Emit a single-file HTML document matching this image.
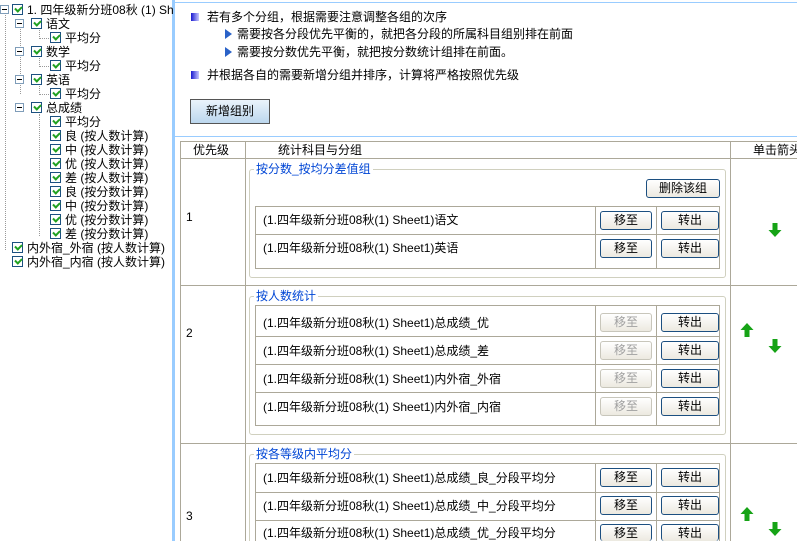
<!DOCTYPE html>
<html><head><meta charset="utf-8"><style>
*{margin:0;padding:0;box-sizing:border-box}
html,body{width:797px;height:541px;overflow:hidden}
body{background:#fff;font-family:"Liberation Sans","WenQuanYi Zen Hei","Noto Sans CJK SC",sans-serif;font-size:12px;color:#000}
#w{position:relative;width:797px;height:541px;overflow:hidden}
.a{position:absolute;white-space:nowrap}
.t{position:absolute;white-space:nowrap;height:14px;line-height:14px;font-size:12px}
.cb{position:absolute;width:11px;height:11px;border:1px solid #1c5180;background:#fff}
.cb:after{content:"";position:absolute;left:2px;top:1px;width:5px;height:3px;border-left:2px solid #21a121;border-bottom:2px solid #21a121;transform:rotate(-45deg)}
.mx{position:absolute;width:9px;height:9px;border:1px solid #7f9db9;background:#fff}
.mx:after{content:"";position:absolute;left:1px;top:3px;width:5px;height:1px;background:#000}
.dv{position:absolute;border-left:1px dotted #999}
.dh{position:absolute;border-top:1px dotted #999}
.bl{position:absolute;width:8px;height:8px;background:linear-gradient(90deg,#1a1ad0,#c8c8ff)}
.tri{position:absolute;width:0;height:0;border-left:7px solid #2a62c8;border-top:5px solid transparent;border-bottom:5px solid transparent}
.btn{position:absolute;height:19px;border:1px solid #1c4f80;border-radius:3px;background:linear-gradient(#fff,#ece9e0);text-align:center;line-height:17px;font-size:12px;overflow:hidden}
.dis{border-color:#c8c6bb;color:#a0a0a0}
.ln{position:absolute;background:#aca899}
.fs{position:absolute;border:1px solid #d0d0bf;border-radius:3px}
.lg{position:absolute;background:#fff;color:#0046d5;padding:0 2px;font-size:12px;line-height:14px}
.arr{position:absolute;width:14px;height:14px}
</style></head><body><div id="w">
<div class="a" style="left:172px;top:0;width:3px;height:541px;background:#99ccff"></div>
<div class="a" style="left:175px;top:2px;width:622px;height:1px;background:#99ccff"></div>

<div class="mx" style="left:0;top:5px"></div><div class="cb" style="left:12px;top:4px"></div><div class="t" style="left:27px;top:3px">1. 四年级新分班08秋 (1) Sh</div>
<div class="dv" style="left:5px;top:15px;height:235px"></div>
<div class="dv" style="left:20px;top:24px;height:70px"></div>
<div class="mx" style="left:15px;top:19px"></div><div class="cb" style="left:31px;top:18px"></div><div class="t" style="left:46px;top:17px">语文</div>
<div class="dh" style="left:39px;top:38px;width:10px"></div><div class="dv" style="left:39px;top:30px;height:9px"></div><div class="cb" style="left:50px;top:32px"></div><div class="t" style="left:65px;top:31px">平均分</div>
<div class="mx" style="left:15px;top:47px"></div><div class="cb" style="left:31px;top:46px"></div><div class="t" style="left:46px;top:45px">数学</div>
<div class="dh" style="left:39px;top:66px;width:10px"></div><div class="dv" style="left:39px;top:58px;height:9px"></div><div class="cb" style="left:50px;top:60px"></div><div class="t" style="left:65px;top:59px">平均分</div>
<div class="mx" style="left:15px;top:75px"></div><div class="cb" style="left:31px;top:74px"></div><div class="t" style="left:46px;top:73px">英语</div>
<div class="dh" style="left:39px;top:94px;width:10px"></div><div class="dv" style="left:39px;top:86px;height:9px"></div><div class="cb" style="left:50px;top:88px"></div><div class="t" style="left:65px;top:87px">平均分</div>
<div class="mx" style="left:15px;top:103px"></div><div class="cb" style="left:31px;top:102px"></div><div class="t" style="left:46px;top:101px">总成绩</div>
<div class="dv" style="left:39px;top:114px;height:122px"></div>
<div class="cb" style="left:50px;top:116px"></div><div class="t" style="left:65px;top:115px">平均分</div>
<div class="cb" style="left:50px;top:130px"></div><div class="t" style="left:65px;top:129px">良 (按人数计算)</div>
<div class="cb" style="left:50px;top:144px"></div><div class="t" style="left:65px;top:143px">中 (按人数计算)</div>
<div class="cb" style="left:50px;top:158px"></div><div class="t" style="left:65px;top:157px">优 (按人数计算)</div>
<div class="cb" style="left:50px;top:172px"></div><div class="t" style="left:65px;top:171px">差 (按人数计算)</div>
<div class="cb" style="left:50px;top:186px"></div><div class="t" style="left:65px;top:185px">良 (按分数计算)</div>
<div class="cb" style="left:50px;top:200px"></div><div class="t" style="left:65px;top:199px">中 (按分数计算)</div>
<div class="cb" style="left:50px;top:214px"></div><div class="t" style="left:65px;top:213px">优 (按分数计算)</div>
<div class="cb" style="left:50px;top:228px"></div><div class="t" style="left:65px;top:227px">差 (按分数计算)</div>
<div class="cb" style="left:12px;top:242px"></div><div class="t" style="left:27px;top:241px">内外宿_外宿 (按人数计算)</div>
<div class="cb" style="left:12px;top:256px"></div><div class="t" style="left:27px;top:255px">内外宿_内宿 (按人数计算)</div>

<div class="bl" style="left:191px;top:13px"></div><div class="t" style="left:207px;top:10px">若有多个分组，根据需要注意调整各组的次序</div>
<div class="tri" style="left:225px;top:29px"></div><div class="t" style="left:237px;top:27px">需要按各分段优先平衡的，就把各分段的所属科目组别排在前面</div>
<div class="tri" style="left:225px;top:47px"></div><div class="t" style="left:237px;top:45px">需要按分数优先平衡，就把按分数统计组排在前面。</div>
<div class="bl" style="left:191px;top:71px"></div><div class="t" style="left:207px;top:68px">并根据各自的需要新增分组并排序，计算将严格按照优先级</div>
<div class="a" style="left:190px;top:99px;width:80px;height:25px;border:1px solid #555;background:linear-gradient(#eaf3fb,#bcd7ee);text-align:center;line-height:23px">新增组别</div>
<div class="a" style="left:175px;top:136px;width:622px;height:1px;background:#99ccff"></div>

<div class="ln" style="left:180px;top:141px;width:617px;height:1px"></div>
<div class="ln" style="left:180px;top:158px;width:617px;height:1px"></div>
<div class="ln" style="left:180px;top:285px;width:617px;height:1px"></div>
<div class="ln" style="left:180px;top:443px;width:617px;height:1px"></div>
<div class="ln" style="left:180px;top:141px;width:1px;height:400px"></div>
<div class="ln" style="left:245px;top:141px;width:1px;height:400px"></div>
<div class="ln" style="left:730px;top:141px;width:1px;height:400px"></div>
<div class="t" style="left:193px;top:143px">优先级</div>
<div class="t" style="left:278px;top:143px">统计科目与分组</div>
<div class="t" style="left:753px;top:143px">单击箭头</div>
<div class="t" style="left:186px;top:210px">1</div>
<div class="t" style="left:186px;top:326px">2</div>
<div class="t" style="left:186px;top:509px">3</div>

<div class="fs" style="left:249px;top:169px;width:477px;height:109px"></div>
<div class="lg" style="left:254px;top:162px">按分数_按均分差值组</div>
<div class="btn" style="left:646px;top:179px;width:74px">删除该组</div>
<div class="a" style="left:255px;top:206px;width:465px;height:63px;border:1px solid #aca899"></div>
<div class="ln" style="left:255px;top:234px;width:465px;height:1px"></div>
<div class="ln" style="left:595px;top:206px;width:1px;height:63px"></div>
<div class="ln" style="left:656px;top:206px;width:1px;height:63px"></div>
<div class="t" style="left:263px;top:213px">(1.四年级新分班08秋(1) Sheet1)语文</div>
<div class="t" style="left:263px;top:241px">(1.四年级新分班08秋(1) Sheet1)英语</div>
<div class="btn" style="left:600px;top:211px;width:52px">移至</div><div class="btn" style="left:661px;top:211px;width:58px">转出</div>
<div class="btn" style="left:600px;top:239px;width:52px">移至</div><div class="btn" style="left:661px;top:239px;width:58px">转出</div>

<div class="fs" style="left:249px;top:296px;width:477px;height:139px"></div>
<div class="lg" style="left:254px;top:289px">按人数统计</div>
<div class="a" style="left:255px;top:305px;width:465px;height:121px;border:1px solid #aca899"></div>
<div class="ln" style="left:255px;top:336px;width:465px;height:1px"></div>
<div class="ln" style="left:255px;top:364px;width:465px;height:1px"></div>
<div class="ln" style="left:255px;top:392px;width:465px;height:1px"></div>
<div class="ln" style="left:595px;top:305px;width:1px;height:121px"></div>
<div class="ln" style="left:656px;top:305px;width:1px;height:121px"></div>
<div class="t" style="left:263px;top:316px">(1.四年级新分班08秋(1) Sheet1)总成绩_优</div>
<div class="t" style="left:263px;top:344px">(1.四年级新分班08秋(1) Sheet1)总成绩_差</div>
<div class="t" style="left:263px;top:372px">(1.四年级新分班08秋(1) Sheet1)内外宿_外宿</div>
<div class="t" style="left:263px;top:400px">(1.四年级新分班08秋(1) Sheet1)内外宿_内宿</div>
<div class="btn dis" style="left:600px;top:313px;width:52px">移至</div><div class="btn" style="left:661px;top:313px;width:58px">转出</div>
<div class="btn dis" style="left:600px;top:341px;width:52px">移至</div><div class="btn" style="left:661px;top:341px;width:58px">转出</div>
<div class="btn dis" style="left:600px;top:369px;width:52px">移至</div><div class="btn" style="left:661px;top:369px;width:58px">转出</div>
<div class="btn dis" style="left:600px;top:397px;width:52px">移至</div><div class="btn" style="left:661px;top:397px;width:58px">转出</div>

<div class="a" style="left:249px;top:454px;width:477px;height:87px;border:1px solid #d0d0bf;border-bottom:none;border-radius:3px 3px 0 0"></div>
<div class="lg" style="left:254px;top:447px">按各等级内平均分</div>
<div class="a" style="left:255px;top:463px;width:465px;height:78px;border:1px solid #aca899;border-bottom:none"></div>
<div class="ln" style="left:255px;top:492px;width:465px;height:1px"></div>
<div class="ln" style="left:255px;top:520px;width:465px;height:1px"></div>
<div class="ln" style="left:595px;top:463px;width:1px;height:78px"></div>
<div class="ln" style="left:656px;top:463px;width:1px;height:78px"></div>
<div class="t" style="left:263px;top:471px">(1.四年级新分班08秋(1) Sheet1)总成绩_良_分段平均分</div>
<div class="t" style="left:263px;top:499px">(1.四年级新分班08秋(1) Sheet1)总成绩_中_分段平均分</div>
<div class="t" style="left:263px;top:526px">(1.四年级新分班08秋(1) Sheet1)总成绩_优_分段平均分</div>
<div class="btn" style="left:600px;top:468px;width:52px">移至</div><div class="btn" style="left:661px;top:468px;width:58px">转出</div>
<div class="btn" style="left:600px;top:496px;width:52px">移至</div><div class="btn" style="left:661px;top:496px;width:58px">转出</div>
<div class="btn" style="left:600px;top:524px;width:52px;height:17px;border-bottom:none">移至</div><div class="btn" style="left:661px;top:524px;width:58px;height:17px;border-bottom:none">转出</div>

<svg class="arr" style="left:768px;top:223px" viewBox="0 0 14 14"><path d="M4.5 0h5v7h4l-6.5 7-6.5-7h4z" fill="#16a316"/></svg>
<svg class="arr" style="left:740px;top:323px" viewBox="0 0 14 14"><path d="M4.5 14h5v-7h4l-6.5-7-6.5 7h4z" fill="#16a316"/></svg>
<svg class="arr" style="left:768px;top:339px" viewBox="0 0 14 14"><path d="M4.5 0h5v7h4l-6.5 7-6.5-7h4z" fill="#16a316"/></svg>
<svg class="arr" style="left:740px;top:507px" viewBox="0 0 14 14"><path d="M4.5 14h5v-7h4l-6.5-7-6.5 7h4z" fill="#16a316"/></svg>
<svg class="arr" style="left:768px;top:522px" viewBox="0 0 14 14"><path d="M4.5 0h5v7h4l-6.5 7-6.5-7h4z" fill="#16a316"/></svg>
</div></body></html>
